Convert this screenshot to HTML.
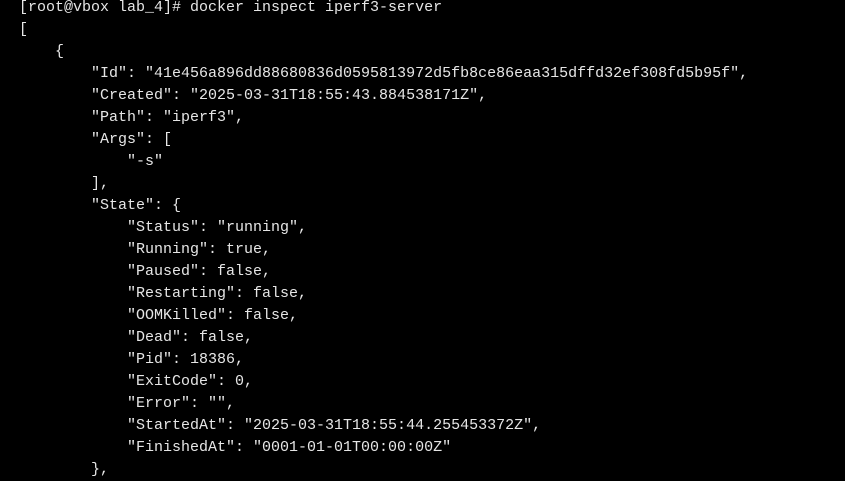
<!DOCTYPE html>
<html><head><style>
html,body{margin:0;padding:0;background:#000;width:845px;height:481px;overflow:hidden}
pre{margin:0;position:absolute;left:19px;top:-3px;font-family:"Liberation Mono",monospace;font-size:15px;line-height:22px;color:#e6e6e6;white-space:pre}
</style></head><body><pre>[root@vbox lab_4]# docker inspect iperf3-server
[
    {
        "Id": "41e456a896dd88680836d0595813972d5fb8ce86eaa315dffd32ef308fd5b95f",
        "Created": "2025-03-31T18:55:43.884538171Z",
        "Path": "iperf3",
        "Args": [
            "-s"
        ],
        "State": {
            "Status": "running",
            "Running": true,
            "Paused": false,
            "Restarting": false,
            "OOMKilled": false,
            "Dead": false,
            "Pid": 18386,
            "ExitCode": 0,
            "Error": "",
            "StartedAt": "2025-03-31T18:55:44.255453372Z",
            "FinishedAt": "0001-01-01T00:00:00Z"
        },</pre></body></html>
